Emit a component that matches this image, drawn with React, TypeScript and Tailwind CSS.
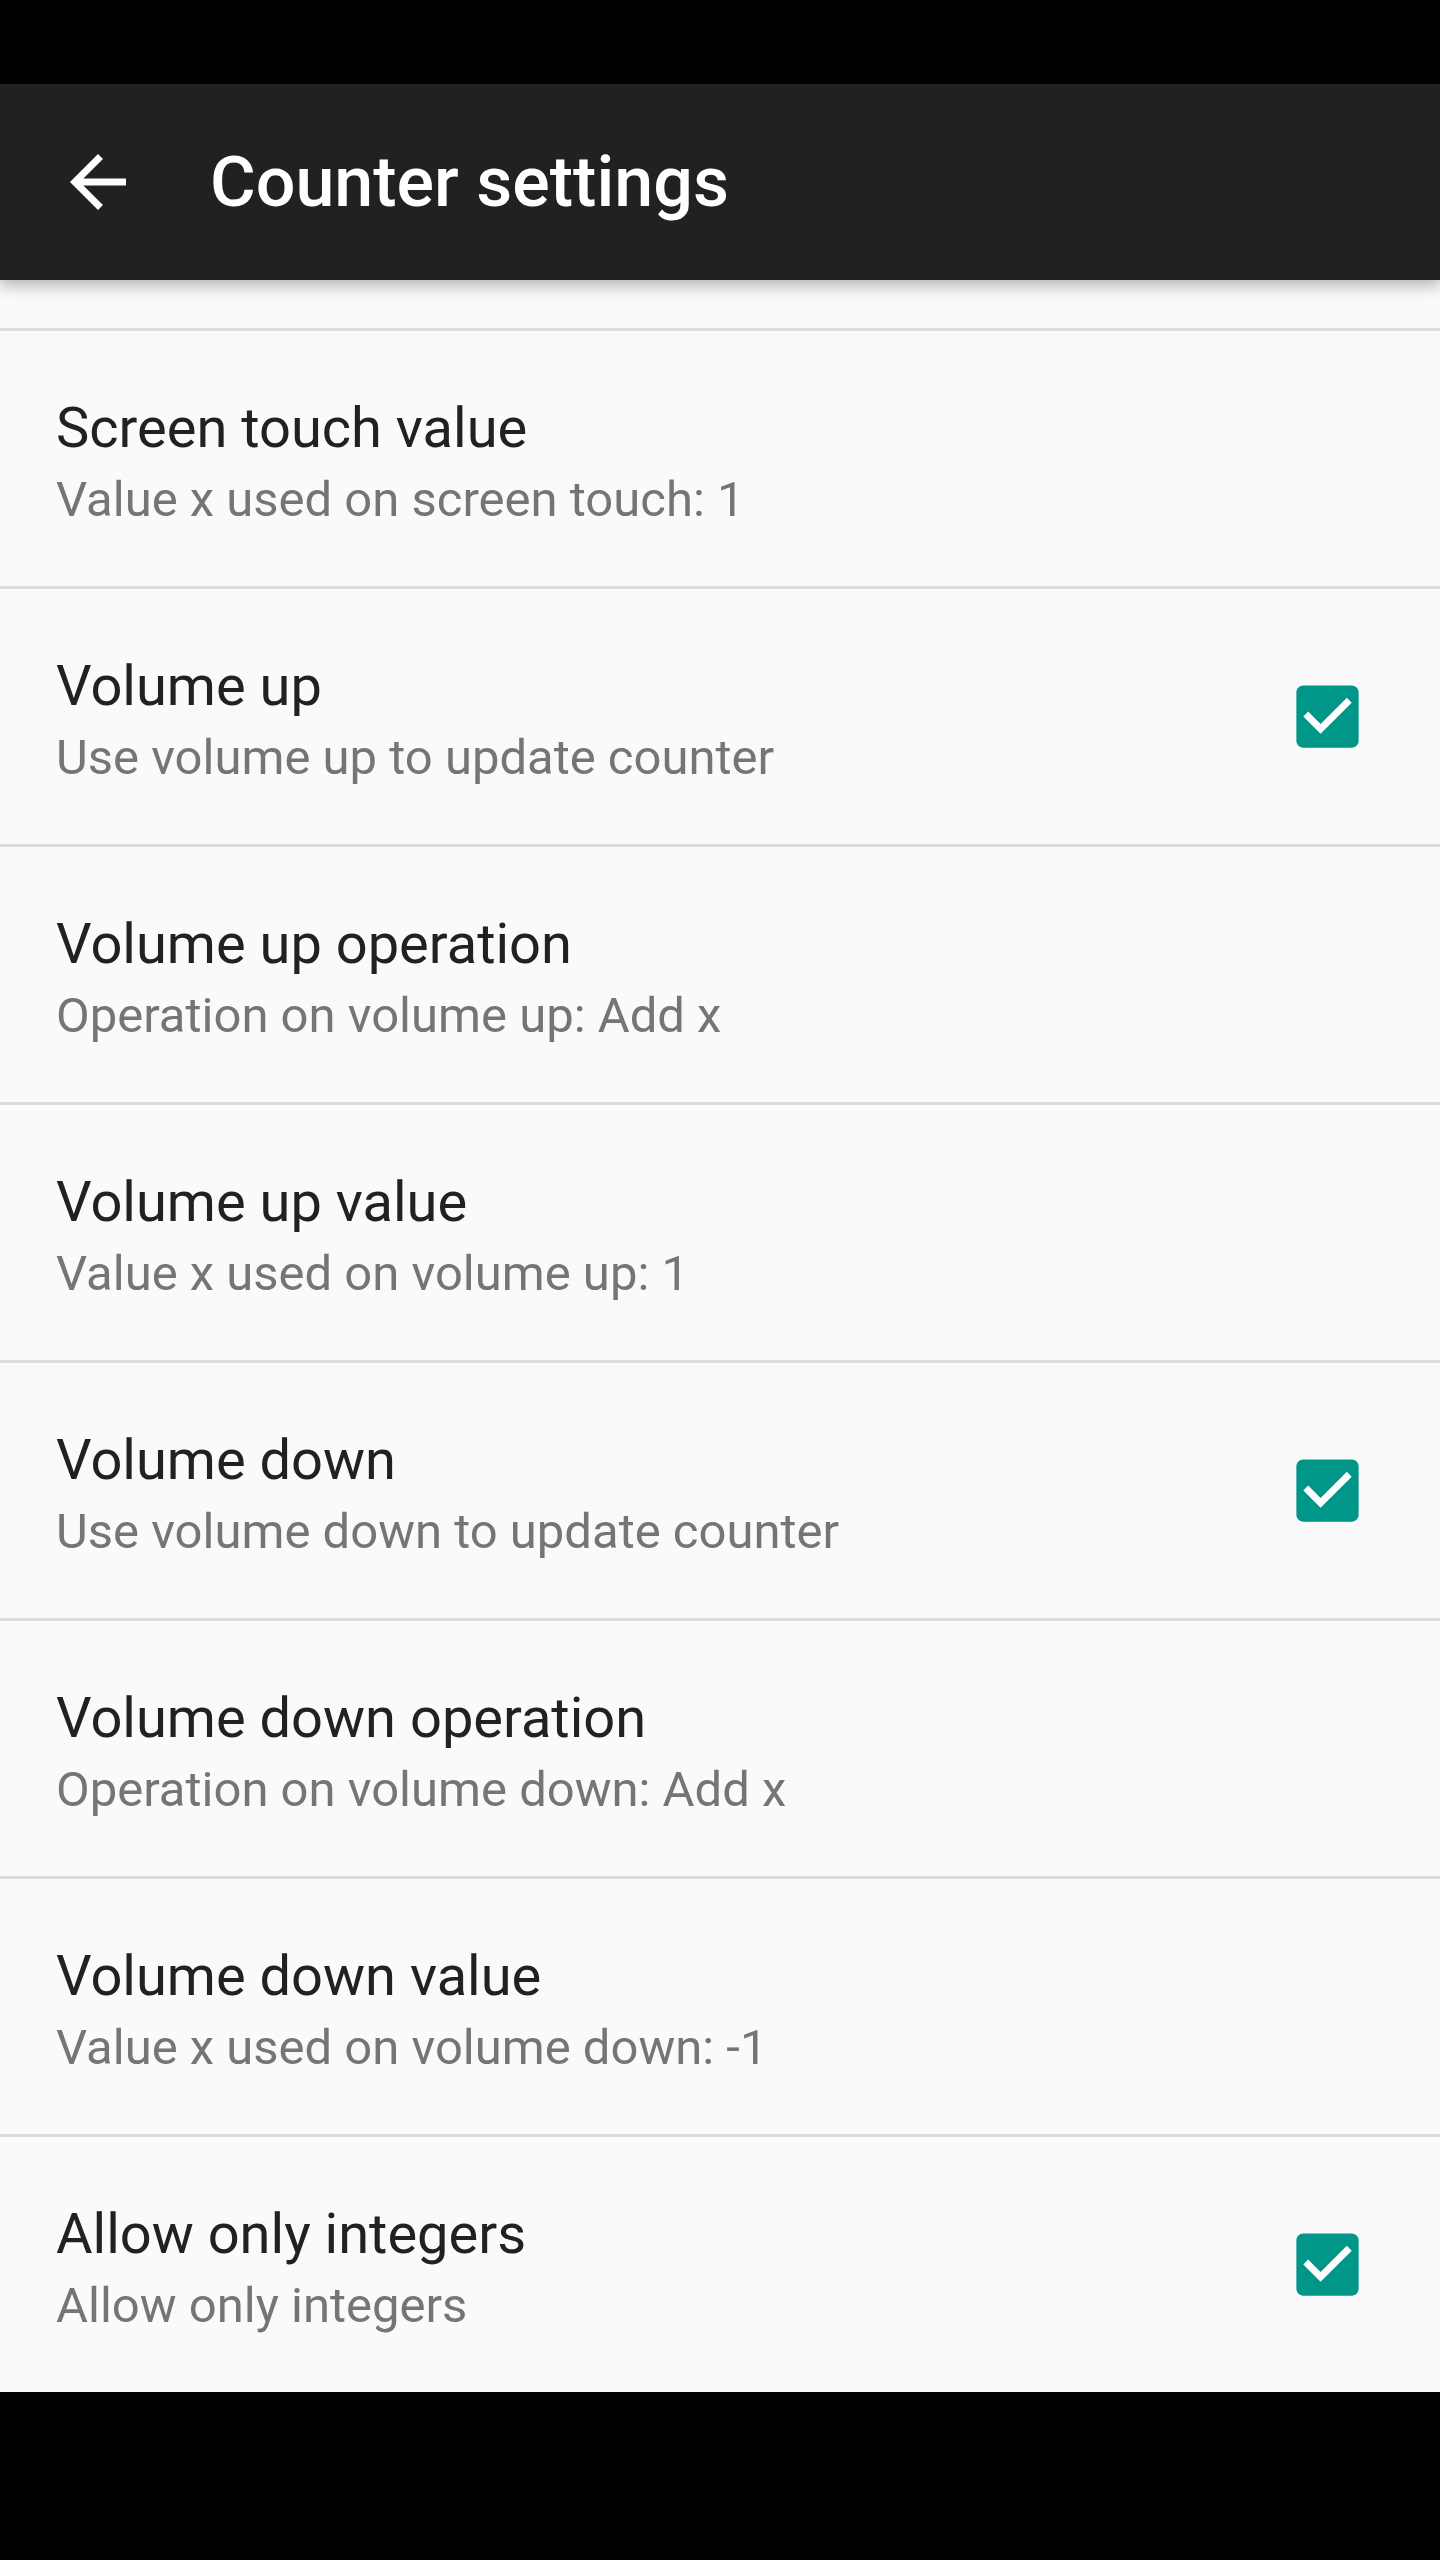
import type { ReactNode } from "react";

type Pref = {
	title: string;
	summary: string;
	checked?: boolean;
};

const prefs: Pref[] = [
	{ title: "Screen touch value", summary: "Value x used on screen touch: 1" },
	{ title: "Volume up", summary: "Use volume up to update counter", checked: true },
	{ title: "Volume up operation", summary: "Operation on volume up: Add x" },
	{ title: "Volume up value", summary: "Value x used on volume up: 1" },
	{ title: "Volume down", summary: "Use volume down to update counter", checked: true },
	{ title: "Volume down operation", summary: "Operation on volume down: Add x" },
	{ title: "Volume down value", summary: "Value x used on volume down: -1" },
	{ title: "Allow only integers", summary: "Allow only integers", checked: true },
];

function CheckBox() {
	return (
		<svg width="83" height="83" viewBox="0 0 24 24" className="shrink-0">
			<path
				fill="#009688"
				d="M19 3H5c-1.11 0-2 .9-2 2v14c0 1.1.89 2 2 2h14c1.11 0 2-.9 2-2V5c0-1.1-.89-2-2-2z"
			/>
			<path fill="#ffffff" d="M10 17l-5-5 1.41-1.41L10 14.17l7.59-7.59L19 8l-9 9z" />
		</svg>
	);
}

function Divider() {
	return <div className="h-[3px] w-full bg-[#dddddd]" />;
}

function PrefRow({ pref }: { pref: Pref }): ReactNode {
	return (
		<div className="flex h-[255px] items-center pl-[56px] pr-[71px]">
			<div className="flex flex-1 flex-col pt-[6px]">
				<span className="text-[56px] leading-[66px] text-[#212121]">{pref.title}</span>
				<span className="mt-[10px] text-[49px] leading-[58px] text-[#757575]">
					{pref.summary}
				</span>
			</div>
			{pref.checked && <CheckBox />}
		</div>
	);
}

export default function App() {
	return (
		<div className="flex h-[2560px] w-[1440px] flex-col bg-black font-['Roboto',sans-serif]">
			<div className="h-[84px] w-full bg-black" />
			<div className="relative z-10 flex h-[196px] items-center bg-[#212121] shadow-[0_6px_14px_rgba(0,0,0,0.28)]">
				<svg width="84" height="84" viewBox="0 0 24 24" className="ml-[56px] shrink-0">
					<path
						fill="#ffffff"
						d="M20 11H7.83l5.59-5.59L12 4l-8 8 8 8 1.41-1.41L7.83 13H20v-2z"
					/>
				</svg>
				<span className="ml-[70px] text-[70px] font-medium text-white">Counter settings</span>
			</div>
			<div className="flex flex-col bg-[#fafafa]">
				<div className="h-[48px]" />
				{prefs.map((p) => (
					<div key={p.title}>
						<Divider />
						<PrefRow pref={p} />
					</div>
				))}
			</div>
			<div className="flex-1 bg-black" />
		</div>
	);
}
